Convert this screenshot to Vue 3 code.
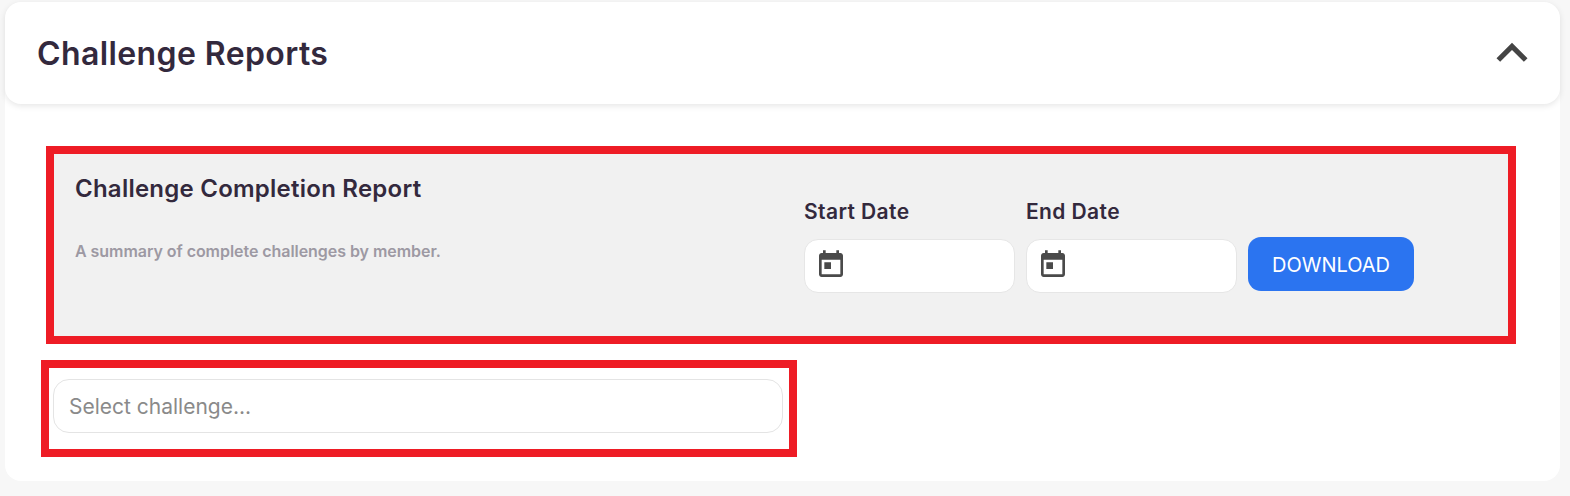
<template>
  <div class="page">
    <section class="card">
      <header class="card-header">
        <h1 class="card-title">Challenge Reports</h1>
        <svg class="collapse-icon" viewBox="0 0 24 24" aria-hidden="true">
          <path d="M12 8l-6 6 1.41 1.41L12 10.83l4.59 4.58L18 14z" />
        </svg>
      </header>

      <div class="report-box">
        <div class="report-panel">
          <div class="report-info">
            <h2 class="report-title">Challenge Completion Report</h2>
            <p class="report-desc">A summary of complete challenges by member.</p>
          </div>
          <div class="report-form">
            <div v-for="field in dateFields" :key="field" class="date-field">
              <label class="date-label">{{ field }}</label>
              <div class="date-input">
                <svg class="calendar-icon" viewBox="0 0 24 24" aria-hidden="true">
                  <path d="M19 3h-1V1h-2v2H8V1H6v2H5c-1.11 0-1.99.9-1.99 2L3 19c0 1.1.89 2 2 2h14c1.1 0 2-.9 2-2V5c0-1.1-.9-2-2-2zm0 16H5V8h14v11zM7 10h5v5H7z" />
                </svg>
              </div>
            </div>
            <button type="button" class="download-btn">DOWNLOAD</button>
          </div>
        </div>
      </div>

      <div class="select-box">
        <input class="challenge-select" type="text" placeholder="Select challenge..." />
      </div>
    </section>
  </div>
</template>

<script setup>
const dateFields = ['Start Date', 'End Date']
</script>

<style>
html, body {
  margin: 0;
  background: #f7f7f7;
}
</style>

<style scoped>
.page {
  padding: 2px 10px 15px 5px;
  font-family: Inter, "Open Sans", sans-serif;
  color: #33293d;
}

.card {
  background: #fff;
  border-radius: 16px;
  padding-bottom: 24px;
}

.card-header {
  display: flex;
  align-items: center;
  justify-content: space-between;
  height: 102px;
  padding: 0 17px 0 32px;
  box-sizing: border-box;
  border-radius: 16px;
  box-shadow: 0 2px 6px rgba(0, 0, 0, 0.1);
}

.card-title {
  margin: 0;
  font-size: 32px;
  font-weight: 600;
  letter-spacing: 0.4px;
}

.collapse-icon {
  width: 62px;
  height: 62px;
  fill: #444;
}

.report-box {
  margin: 42px 44px 0 41px;
  border: 8px solid #ee1c25;
}

.report-panel {
  display: grid;
  grid-template-columns: 1fr 1fr;
  height: 182px;
  background: #f1f1f1;
}

.report-info {
  padding: 21px 21px 0;
}

.report-title {
  margin: 0;
  font-size: 24px;
  line-height: 28px;
  font-weight: 600;
  letter-spacing: 0.24px;
}

.report-desc {
  margin: 38px 0 0;
  font-size: 16px;
  line-height: 20px;
  font-weight: 600;
  letter-spacing: -0.05px;
  color: #9d99a3;
}

.report-form {
  display: flex;
  align-items: flex-end;
  gap: 11px;
  padding: 0 21px 45px 23px;
}

.date-field {
  display: flex;
  flex-direction: column;
  gap: 15px;
  width: 211px;
}

.date-label {
  font-size: 21px;
  line-height: 24px;
  font-weight: 600;
  letter-spacing: 0.4px;
}

.date-input {
  display: flex;
  align-items: center;
  height: 54px;
  margin-bottom: -2px;
  padding: 0 0 2px 10px;
  box-sizing: border-box;
  background: #fff;
  border: 1px solid #e6e6e6;
  border-radius: 14px;
}

.calendar-icon {
  width: 32px;
  height: 32px;
  fill: #4a4a4a;
}

.download-btn {
  width: 166px;
  height: 54px;
  padding: 2px 0 0;
  border: none;
  border-radius: 13px;
  background: #2b74f0;
  color: #fff;
  font-family: inherit;
  font-size: 20px;
}

.select-box {
  width: 756px;
  margin: 16px 0 0 36px;
  padding: 11px 6px 16px 4px;
  box-sizing: border-box;
  border: 8px solid #ee1c25;
}

.challenge-select {
  display: block;
  width: 100%;
  height: 54px;
  padding: 0 15px;
  box-sizing: border-box;
  border: 1px solid #e4e4e4;
  border-radius: 16px;
  outline: none;
  font-family: inherit;
  font-size: 21px;
}

.challenge-select::placeholder {
  color: #8a8a8a;
}
</style>
